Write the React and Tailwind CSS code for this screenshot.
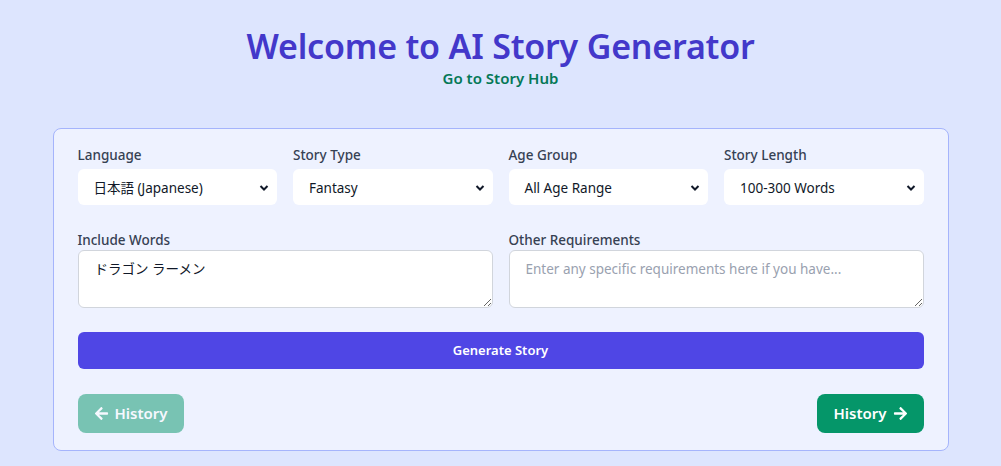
import React from "react";
import { FaArrowLeft, FaArrowRight } from "react-icons/fa";

const font = {
  fontFamily: '"Noto Sans", "Noto Sans CJK JP", sans-serif',
};

const selects = [
  { label: "Language", value: "日本語 (Japanese)" },
  { label: "Story Type", value: "Fantasy" },
  { label: "Age Group", value: "All Age Range" },
  { label: "Story Length", value: "100-300 Words" },
];

const App = () => {
  return (
    <div
      className="min-h-screen bg-[#dde5fe] flex flex-col items-center pt-[26px]"
      style={font}
    >
      <h1 className="text-[34px] leading-[40px] font-semibold text-[#4338ca] tracking-[-0.2px]">
        Welcome to AI Story Generator
      </h1>
      <a className="text-[15px] leading-[22px] font-semibold text-[#047857] mt-[1px]">
        Go to Story Hub
      </a>

      <div className="mt-[39px] w-[896px] bg-[#eef2ff] border border-[#a5b4fc] rounded-lg px-6 pt-4 pb-[17px]">
        <div className="grid grid-cols-4 gap-x-4">
          {selects.map((s) => (
            <div key={s.label} className="flex flex-col">
              <label className="text-[13.5px] leading-5 font-medium text-gray-700 mb-1">
                {s.label}
              </label>
              <div className="h-9 bg-white rounded-md flex items-center pl-4 pr-2 pt-[2px]">
                <span className="text-[13.5px] text-gray-900 flex-1">{s.value}</span>
                <svg width="10" height="10" viewBox="0 0 10 10" className="text-gray-900">
                  <path d="M1.5 3l3.5 3.5L8.5 3" fill="none" stroke="currentColor" strokeWidth="2" />
                </svg>
              </div>
            </div>
          ))}
        </div>

        <div className="grid grid-cols-2 gap-x-4 mt-[25px]">
          <div className="flex flex-col">
            <label className="text-[13.5px] leading-5 font-medium text-gray-700">
              Include Words
            </label>
            <textarea
              rows={2}
              defaultValue="ドラゴン ラーメン"
              className="bg-white border border-gray-300 rounded-md px-4 py-[8px] text-[13.5px] leading-5 text-gray-900 h-[58px]"
              style={font}
            />
          </div>
          <div className="flex flex-col">
            <label className="text-[13.5px] leading-5 font-medium text-gray-700">
              Other Requirements
            </label>
            <textarea
              rows={2}
              placeholder="Enter any specific requirements here if you have..."
              className="bg-white border border-gray-300 rounded-md px-4 py-[8px] text-[13.5px] leading-5 text-gray-900 placeholder:text-gray-400 h-[58px]"
              style={font}
            />
          </div>
        </div>

        <button className="mt-[24px] w-full h-[37px] bg-[#4f46e5] rounded-md text-white text-[13px] font-semibold">
          Generate Story
        </button>

        <div className="flex justify-between mt-[25px]">
          <button className="h-[39px] px-4 rounded-lg bg-[#059669] opacity-50 text-white text-[15px] font-semibold flex items-center gap-[6px]">
            <FaArrowLeft className="text-[15px]" />
            History
          </button>
          <button className="h-[39px] px-4 rounded-lg bg-[#059669] text-white text-[15px] font-semibold flex items-center gap-[6px]">
            History
            <FaArrowRight className="text-[15px]" />
          </button>
        </div>
      </div>
    </div>
  );
};

export default App;
